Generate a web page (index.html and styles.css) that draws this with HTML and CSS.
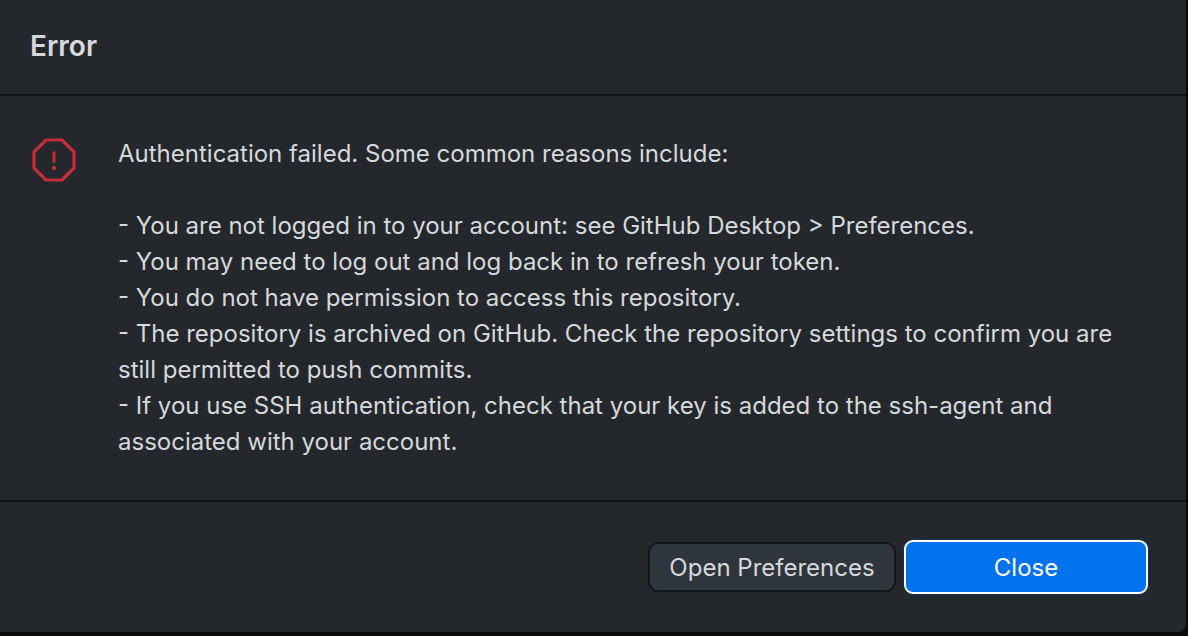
FILE: index.html
```html
<!DOCTYPE html>
<html lang="en">
<head>
<meta charset="utf-8">
<title>Error</title>
<link rel="stylesheet" href="styles.css">
</head>
<body>
<main class="dialog" role="alertdialog" aria-labelledby="title" aria-describedby="message">
  <header class="dialog-header"><h1 id="title">Error</h1></header>
  <section class="dialog-body">
    <svg class="error-icon" viewBox="0 0 44 44" aria-hidden="true">
      <path d="M14 2h16l12 12v16l-12 12h-16l-12-12v-16z" fill="none" stroke="currentColor" stroke-width="3.2" stroke-linejoin="round"/>
      <path d="M22 14.5v9" stroke="currentColor" stroke-width="3" stroke-linecap="round"/>
      <circle cx="22" cy="30" r="2.2" fill="currentColor"/>
    </svg>
    <div class="message" id="message">
      <p>Authentication failed. Some common reasons include:</p>
      <p>- You are not logged in to your account: see GitHub Desktop &gt; Preferences.<br>
      - You may need to log out and log back in to refresh your token.<br>
      - You do not have permission to access this repository.<br>
      - The repository is archived on GitHub. Check the repository settings to confirm you are still permitted to push commits.<br>
      - If you use SSH authentication, check that your key is added to the ssh-agent and associated with your account.</p>
    </div>
  </section>
  <footer class="dialog-footer">
    <button type="button" class="button">Open Preferences</button>
    <button type="button" class="button primary">Close</button>
  </footer>
</main>
</body>
</html>
```
FILE: styles.css
```css
* { box-sizing: border-box; }
body {
  margin: 0;
  background: #0b0b0e;
  color: #d6d8dc;
  font-family: Inter, "Liberation Sans", sans-serif;
  font-size: 24px;
  line-height: 36px;
}
.dialog {
  display: flex;
  flex-direction: column;
  min-height: calc(100vh - 4px);
  margin-right: 2px;
  background: #24282c;
  border-bottom-right-radius: 8px;
}
.dialog-header {
  padding: 28px 30px 30px;
  border-bottom: 2px solid #141518;
}
h1 {
  margin: 0;
  font-size: 28px;
  font-weight: 600;
  line-height: 36px;
}
.dialog-body {
  display: flex;
  flex: 1;
  align-items: flex-start;
  gap: 42px;
  padding: 40px 60px 40px 32px;
}
.error-icon {
  flex: none;
  width: 44px;
  height: 44px;
  margin-top: 2px;
  color: #c42c37;
}
.message p { margin: 0 0 36px; }
.message p:last-child { margin-bottom: 0; }
.dialog-footer {
  display: flex;
  justify-content: flex-end;
  align-items: center;
  gap: 8px;
  padding: 38px;
  border-top: 2px solid #141518;
}
.button {
  width: 248px;
  height: 50px;
  padding: 2px 0 0;
  border: 2px solid #141518;
  border-radius: 10px;
  background: #2f353d;
  color: inherit;
  font: inherit;
}
.primary {
  width: 244px;
  height: 54px;
  border-color: #fff;
  border-radius: 9px;
  background: #0372ef;
  box-shadow: 0 0 2px 1px #1d3557;
  color: #fff;
}
```
